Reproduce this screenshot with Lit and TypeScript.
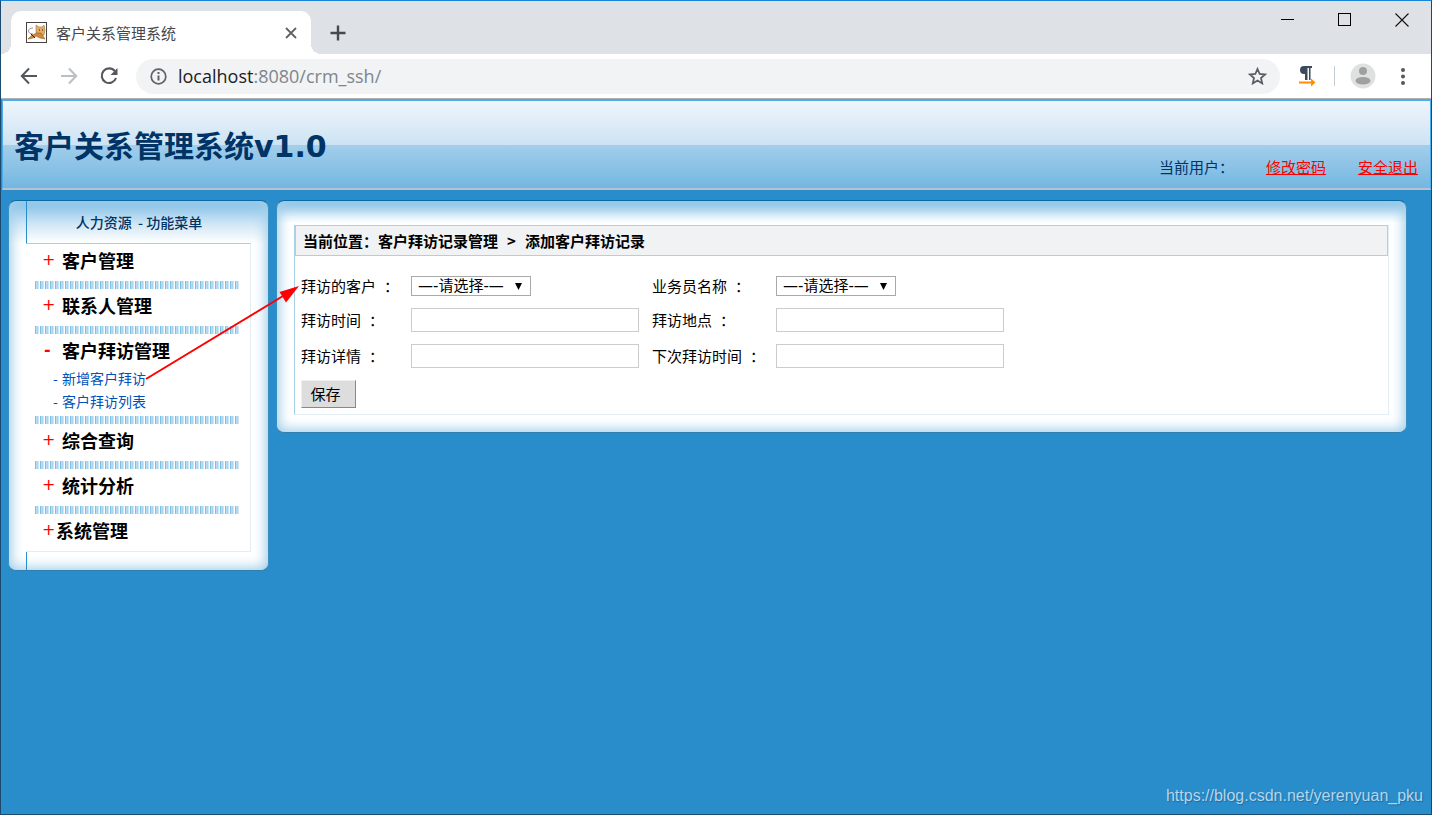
import { LitElement, html, css, svg } from "lit";
import { customElement, state } from "lit/decorators.js";

interface MenuGroup {
  title: string;
  tight?: boolean;
  children?: string[];
}

const MENU: MenuGroup[] = [
  { title: "客户管理" },
  { title: "联系人管理" },
  { title: "客户拜访管理", children: ["新增客户拜访", "客户拜访列表"] },
  { title: "综合查询" },
  { title: "统计分析" },
  { title: "系统管理", tight: true },
];

@customElement("browser-bar")
export class BrowserBar extends LitElement {
  static styles = css`
    :host {
      display: block;
      font-family: "Noto Sans CJK SC", sans-serif;
    }
    button {
      border: 0;
      padding: 0;
      background: none;
      display: grid;
      place-items: center;
    }
    svg {
      display: block;
    }
    .strip {
      display: flex;
      align-items: flex-end;
      height: 53px;
      padding: 0 1px 0 10px;
      background: #dee1e6;
    }
    .tab {
      position: relative;
      display: flex;
      align-items: center;
      width: 300px;
      height: 43px;
      padding: 0 12px 0 15px;
      box-sizing: border-box;
      border-radius: 10px 10px 0 0;
      background: #fff;
    }
    .tab::before,
    .tab::after {
      content: "";
      position: absolute;
      bottom: 0;
      width: 10px;
      height: 10px;
    }
    .tab::before {
      right: 100%;
      background: radial-gradient(circle at 0 0, transparent 10px, #fff 10px);
    }
    .tab::after {
      left: 100%;
      background: radial-gradient(circle at 100% 0, transparent 10px, #fff 10px);
    }
    .name {
      flex: 1;
      margin-left: 9px;
      font-size: 15px;
      line-height: 20px;
      color: #45494d;
    }
    .close {
      width: 16px;
      height: 16px;
    }
    .plus {
      width: 54px;
      height: 43px;
    }
    .wins {
      display: flex;
      align-self: flex-start;
      margin-left: auto;
    }
    .wins button {
      width: 57px;
      height: 37px;
    }
    .tools {
      display: flex;
      align-items: center;
      height: 44px;
      padding: 0 15px 0 8px;
      background: #fff;
      border-bottom: 1px solid #b0b0b0;
    }
    .tools > button {
      width: 40px;
      height: 36px;
    }
    .address {
      display: flex;
      align-items: center;
      flex: 1;
      height: 35px;
      margin-left: 7px;
      padding: 0 13px 0 14px;
      border-radius: 18px;
      background: #f1f3f4;
    }
    .url {
      flex: 1;
      margin-left: 11px;
      font: 18px/26px "Open Sans", "Noto Sans", sans-serif;
      color: #80868b;
    }
    .host {
      color: #202124;
    }
    .tools > .ext {
      width: 54px;
    }
    .rule {
      width: 1px;
      height: 20px;
      background: #c3cdd5;
    }
    .tools > .user {
      width: 55px;
    }
    .tools > .more {
      width: 26px;
    }
  `;

  render() {
    return html`
      <div class="strip">
        <div class="tab">
          <svg width="21" height="21" viewBox="0 0 21 21">
            <rect x="0.5" y="0.5" width="20" height="20" fill="#fff" stroke="#444" />
            <path d="M10 3l3 2h3l2-2 1 5-1 5-4 1-4-3z" fill="#e3ad68" stroke="#a8743a" stroke-width=".6" />
            <path d="M2 17l4-4 5-2h4l4 6-5-1-4-2-3 2-4 1z" fill="#d28a35" stroke="#7b5223" stroke-width=".5" />
            <path d="M7 12C1 12 1 6 7 6" fill="none" stroke="#999" />
            <path d="M5 12l4 4M13 8h1M16 8h1" stroke="#222" />
          </svg>
          <span class="name">客户关系管理系统</span>
          <button class="close" aria-label="关闭标签页">
            <svg width="12" height="12" viewBox="0 0 12 12"><path d="M1 1l10 10M11 1L1 11" stroke="#5f6368" stroke-width="1.8" /></svg>
          </button>
        </div>
        <button class="plus" aria-label="新标签页">
          <svg width="16" height="16" viewBox="0 0 16 16"><path d="M8 .5v15M.5 8h15" stroke="#45494d" stroke-width="2.4" /></svg>
        </button>
        <div class="wins">
          <button aria-label="最小化">
            <svg width="14" height="14"><path d="M0 6.500h13" stroke="#000" /></svg>
          </button>
          <button aria-label="最大化">
            <svg width="14" height="14"><rect x="0.5" y="0.5" width="12" height="12" fill="none" stroke="#000" /></svg>
          </button>
          <button aria-label="关闭">
            <svg width="14" height="14"><path d="M.5 .5l13 13M13.5 .5L.5 13.5" stroke="#111" stroke-width="1.1" /></svg>
          </button>
        </div>
      </div>
      <div class="tools">
        <button aria-label="后退">
          <svg width="18" height="18" viewBox="0 0 18 18"><path d="M17 9H2M9 1.500L1.800 9 9 16.500" fill="none" stroke="#54585c" stroke-width="2" /></svg>
        </button>
        <button aria-label="前进">
          <svg width="18" height="18" viewBox="0 0 18 18"><path d="M1 9h15M9 1.500L16.200 9 9 16.500" fill="none" stroke="#bcbfc2" stroke-width="2" /></svg>
        </button>
        <button aria-label="刷新">
          <svg width="18" height="18" viewBox="0 0 18 18">
            <path d="M14.800 4.200A7.300 7.300 0 1 0 16 11" fill="none" stroke="#54585c" stroke-width="2.100" />
            <path d="M17.500 1v7h-7z" fill="#54585c" />
          </svg>
        </button>
        <div class="address">
          <svg width="17" height="17" viewBox="0 0 17 17">
            <circle cx="8.500" cy="8.500" r="7.300" fill="none" stroke="#5f6368" stroke-width="1.700" />
            <path d="M8.500 7.500v5M8.500 4v2" stroke="#5f6368" stroke-width="2" />
          </svg>
          <span class="url"><span class="host">localhost</span>:8080/crm_ssh/</span>
          <svg width="19" height="18" viewBox="0 0 19 18">
            <path d="M9.500 2l2.200 5 5.300.5-4 3.600 1.200 5.300-4.700-2.800-4.700 2.800 1.200-5.300-4-3.600 5.300-.5z" fill="none" stroke="#5a5e62" stroke-width="1.800" />
          </svg>
        </div>
        <button class="ext" aria-label="扩展程序">
          <svg width="17" height="20" viewBox="0 0 17 20">
            <path d="M5 0h8v2h-1.500v12H10V2H8.500v12H6V8H5a4 4 0 0 1 0-8z" fill="#3b4b5c" />
            <path d="M0 15.500h12v-3l4.500 4-4.500 4v-3H0z" fill="#ff8c0a" />
          </svg>
        </button>
        <span class="rule"></span>
        <button class="user" aria-label="用户">
          <svg width="26" height="26" viewBox="0 0 26 26">
            <circle cx="13" cy="13" r="12.500" fill="#dfe1e1" />
            <circle cx="13" cy="8" r="4" fill="#a0a0a0" />
            <ellipse cx="13" cy="17.800" rx="7.500" ry="3.800" fill="#a0a0a0" />
          </svg>
        </button>
        <button class="more" aria-label="更多">
          <svg width="4" height="17" viewBox="0 0 4 17" fill="#54585c">
            <circle cx="2" cy="2" r="2" /><circle cx="2" cy="8.500" r="2" /><circle cx="2" cy="15" r="2" />
          </svg>
        </button>
      </div>
    `;
  }
}

@customElement("side-menu")
export class SideMenu extends LitElement {
  @state() private groups = MENU;

  static styles = css`
    :host {
      display: block;
      font-family: "Noto Sans CJK SC", sans-serif;
    }
    .panel {
      width: 261px;
      box-sizing: border-box;
      padding: 0 17px 18px;
      border: 1px solid #3a8fc2;
      border-top-color: #0a68a3;
      border-bottom-color: #2f80b0;
      border-radius: 8px;
      background:
        linear-gradient(#76bae3, #a9d3ee 12px, #d3e8f6 24px, transparent 42px),
        #fff;
      box-shadow: inset 0 0 12px 3px #a5d0ea;
    }
    .panel::after {
      content: "";
      display: block;
      height: 18px;
      margin-bottom: -18px;
      border-left: 1px solid #298ccb;
    }
    .caption {
      margin: 0;
      height: 42px;
      border-left: 1px solid #298ccb;
      text-align: center;
      font-size: 14px;
      line-height: 42px;
      font-weight: 500;
      color: #003366;
      white-space: pre;
    }
    .list {
      padding: 0 10px 0 9px;
      border: solid #e2edf5;
      border-width: 1px 1px 1px 0;
      border-top-color: #a9cfe4;
      background: #fff;
    }
    .group + .group::before {
      content: "";
      display: block;
      height: 8px;
      background: repeating-linear-gradient(90deg, #7cc0e6 0 1px, #b9dcf1 1px 2px, #a9d5ee 2px 3px, #cfe6f5 3px 4px, #fff 4px 5px);
    }
    .head {
      display: flex;
      align-items: center;
      width: 100%;
      height: 37px;
      padding: 0 0 6px 7px;
      border: 0;
      background: none;
      color: #000;
      font: 700 18px/26px "Noto Sans CJK SC", sans-serif;
    }
    .sign {
      width: 20px;
      text-align: left;
      font: 16px/26px "DejaVu Sans", sans-serif;
      color: #f00;
    }
    .tight .sign {
      width: 14px;
    }
    .minus {
      text-indent: 2px;
      font-weight: 700;
    }
    .subs {
      margin: -4px 0 0;
      padding: 0 0 3px 18px;
      list-style: none;
    }
    .subs a {
      display: block;
      font-size: 14px;
      line-height: 23px;
      color: #0052bb;
      text-decoration: none;
    }
    .subs a::before {
      content: "-";
      display: inline-block;
      width: 9px;
    }
  `;

  render() {
    return html`
      <nav class="panel">
        <h2 class="caption">人力资源  - 功能菜单</h2>
        <div class="list">
          ${this.groups.map(
            (g) => html`
              <div class="group ${g.tight ? "tight" : ""}">
                <button class="head">
                  <span class="sign ${g.children ? "minus" : ""}">${g.children ? "-" : "+"}</span>${g.title}
                </button>
                ${g.children
                  ? html`<ul class="subs">
                      ${g.children.map((c) => html`<li><a href="#">${c}</a></li>`)}
                    </ul>`
                  : null}
              </div>
            `
          )}
        </div>
      </nav>
    `;
  }
}

@customElement("visit-form")
export class VisitForm extends LitElement {
  static styles = css`
    :host {
      display: block;
      font: 15px/20px "Noto Sans CJK SC", sans-serif;
      color: #000;
    }
    .panel {
      padding: 24px 17px 17px;
      border: 1px solid #3a8fc2;
      border-top-color: #0a68a3;
      border-bottom-color: #2f80b0;
      border-radius: 8px;
      background:
        linear-gradient(#76bae3, #b6daf0 9px, #e4f2fa 16px, transparent 22px),
        #fff;
      box-shadow: inset 0 0 12px 3px #a5d0ea;
    }
    .body {
      border: 1px solid #e2edf5;
      border-left-color: #a9cfe4;
      border-top: 0;
      background: #fff;
    }
    .path {
      display: flex;
      gap: 9px;
      margin: 0;
      padding: 5px 6px 4px 7px;
      border: 1px solid #c8c8c8;
      font-size: 15px;
      line-height: 20px;
      font-weight: 700;
      background: #f1f2f4;
    }
    form {
      display: grid;
      grid-template-columns: 110px 241px 124px 228px;
      align-items: center;
      justify-items: start;
      row-gap: 12px;
      padding: 20px 6px 6px;
    }
    .colon {
      margin-left: 8px;
    }
    input {
      width: 228px;
      height: 24px;
      box-sizing: border-box;
      border: 1px solid #ccc;
      background: #fff;
    }
    .pick {
      position: relative;
      display: block;
      height: 20px;
    }
    select {
      appearance: none;
      display: block;
      width: 120px;
      height: 20px;
      padding: 0 0 0 6px;
      border: 1px solid #a9a9a9;
      border-radius: 0;
      background: #fff;
      color: #000;
      font: 15px/18px "DejaVu Sans", "Noto Sans CJK SC", sans-serif;
    }
    .arrow {
      position: absolute;
      right: 9px;
      top: 7px;
      pointer-events: none;
    }
    .save {
      width: 55px;
      height: 28px;
      padding: 0 6px 0 0;
      border: 1px solid #efefef;
      border-right-color: #888;
      border-bottom-color: #888;
      background: #ddd;
      color: #000;
      font: 15px/20px "Noto Sans CJK SC", sans-serif;
    }
  `;

  private label(id: string, text: string) {
    return html`<label for=${id}>${text}<span class="colon">：</span></label>`;
  }

  private pick(id: string) {
    return html`<span class="pick">
      <select id=${id}><option>—-请选择-—</option></select>
      <svg class="arrow" width="7" height="7" viewBox="0 0 7 7"><path d="M0 0h7L3.500 7z" /></svg>
    </span>`;
  }

  render() {
    return html`
      <section class="panel">
        <div class="body">
          <h2 class="path"><span>当前位置：客户拜访记录管理</span><span>&gt;</span><span>添加客户拜访记录</span></h2>
          <form @submit=${(e: Event) => e.preventDefault()}>
            ${this.label("customer", "拜访的客户")} ${this.pick("customer")}
            ${this.label("staff", "业务员名称")} ${this.pick("staff")}
            ${this.label("time", "拜访时间")} <input id="time" />
            ${this.label("place", "拜访地点")} <input id="place" />
            ${this.label("detail", "拜访详情")} <input id="detail" />
            ${this.label("next", "下次拜访时间")} <input id="next" />
            <button class="save">保存</button>
          </form>
        </div>
      </section>
    `;
  }
}

@customElement("app-root")
export class AppRoot extends LitElement {
  static styles = css`
    :host {
      position: relative;
      display: flex;
      flex-direction: column;
      min-height: 100vh;
      box-sizing: border-box;
      border: 1px solid #1c4a6e;
      border-top-color: #1883d7;
      background: #298ccb;
      font-family: "Noto Sans CJK SC", sans-serif;
    }
    .banner {
      display: flex;
      justify-content: space-between;
      height: 91px;
      margin-left: 1px;
      padding: 0 12px 0 11px;
      box-sizing: border-box;
      border: 1px solid #4cadea;
      border-top-width: 2px;
      border-bottom: 2px solid #b9c2cb;
      background: linear-gradient(#eff5fc, #cde3f3 44px, #a2ceeb 44px, #74b7e1);
    }
    .title {
      margin: 24px 0 0;
      font: 700 30px/44px "DejaVu Sans", "Noto Sans CJK SC", sans-serif;
      color: #003366;
    }
    .account {
      display: flex;
      align-self: flex-end;
      gap: 32px;
      margin-bottom: 10px;
      font-size: 15px;
      line-height: 22px;
      color: #003366;
    }
    .account a {
      color: #f00;
    }
    .main {
      display: flex;
      align-items: flex-start;
      gap: 7px;
      padding: 10px 24px 24px 7px;
    }
    visit-form {
      flex: 1;
    }
    .pointer {
      position: absolute;
      left: 144px;
      top: 283px;
      pointer-events: none;
    }
    .mark {
      position: absolute;
      right: 8px;
      bottom: 8px;
      font: 16px/20px "Liberation Sans", sans-serif;
      color: #b5d5eb;
      text-shadow: 1px 1px 1px #1f6ea3;
    }
  `;

  render() {
    return html`
      <browser-bar></browser-bar>
      <header class="banner">
        <h1 class="title">客户关系管理系统v1.0</h1>
        <div class="account">
          <span>当前用户：</span>
          <a href="#">修改密码</a>
          <a href="#">安全退出</a>
        </div>
      </header>
      <main class="main">
        <side-menu></side-menu>
        <visit-form></visit-form>
      </main>
      <svg class="pointer" width="156" height="98" viewBox="0 0 156 98">
        ${svg`<path d="M1 95L138 12" stroke="#f00" stroke-width="2" /><path d="M154 2L134.500 8l6.500 10.500z" fill="#f00" />`}
      </svg>
      <span class="mark">https://blog.csdn.net/yerenyuan_pku</span>
    `;
  }
}
